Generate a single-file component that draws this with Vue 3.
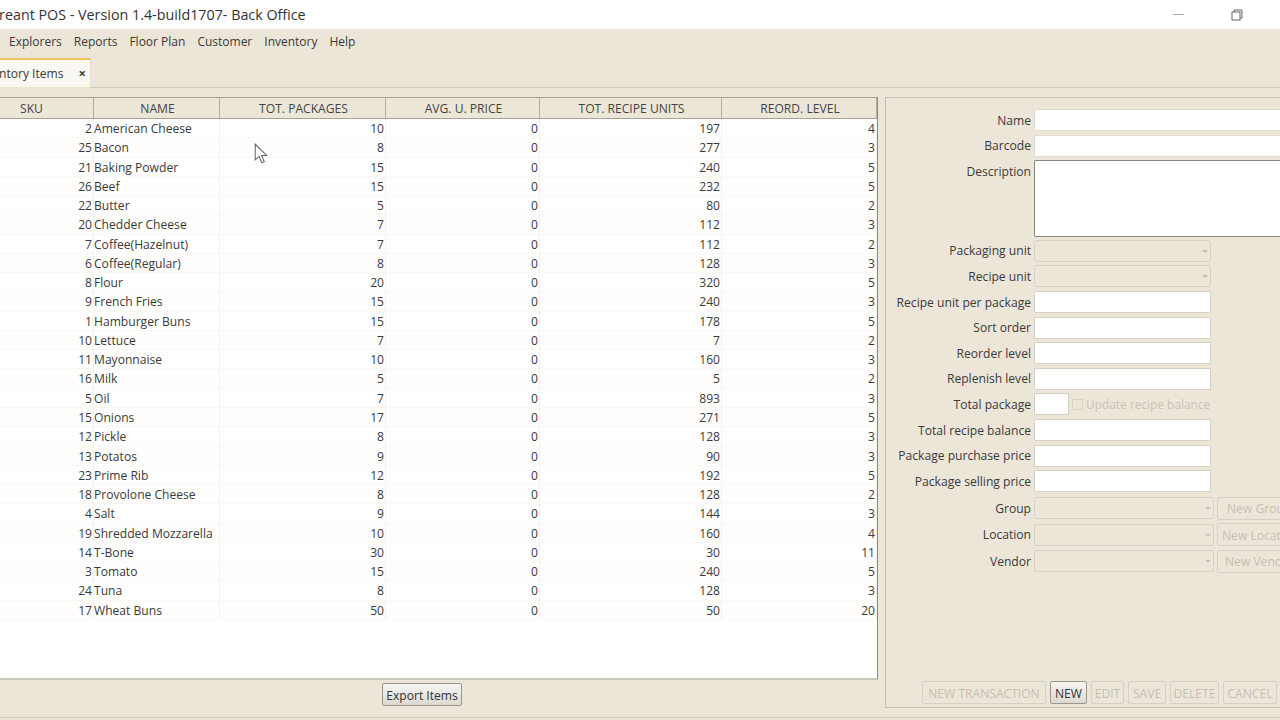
<script setup>
const menus = ['Explorers', 'Reports', 'Floor Plan', 'Customer', 'Inventory', 'Help']
const columns = ['SKU', 'NAME', 'TOT. PACKAGES', 'AVG. U. PRICE', 'TOT. RECIPE UNITS', 'REORD. LEVEL']
const items = [
  [2, 'American Cheese', 10, 0, 197, 4],
  [25, 'Bacon', 8, 0, 277, 3],
  [21, 'Baking Powder', 15, 0, 240, 5],
  [26, 'Beef', 15, 0, 232, 5],
  [22, 'Butter', 5, 0, 80, 2],
  [20, 'Chedder Cheese', 7, 0, 112, 3],
  [7, 'Coffee(Hazelnut)', 7, 0, 112, 2],
  [6, 'Coffee(Regular)', 8, 0, 128, 3],
  [8, 'Flour', 20, 0, 320, 5],
  [9, 'French Fries', 15, 0, 240, 3],
  [1, 'Hamburger Buns', 15, 0, 178, 5],
  [10, 'Lettuce', 7, 0, 7, 2],
  [11, 'Mayonnaise', 10, 0, 160, 3],
  [16, 'Milk', 5, 0, 5, 2],
  [5, 'Oil', 7, 0, 893, 3],
  [15, 'Onions', 17, 0, 271, 5],
  [12, 'Pickle', 8, 0, 128, 3],
  [13, 'Potatos', 9, 0, 90, 3],
  [23, 'Prime Rib', 12, 0, 192, 5],
  [18, 'Provolone Cheese', 8, 0, 128, 2],
  [4, 'Salt', 9, 0, 144, 3],
  [19, 'Shredded Mozzarella', 10, 0, 160, 4],
  [14, 'T-Bone', 30, 0, 30, 11],
  [3, 'Tomato', 15, 0, 240, 5],
  [24, 'Tuna', 8, 0, 128, 3],
  [17, 'Wheat Buns', 50, 0, 50, 20],
]
const units = ['Packaging unit', 'Recipe unit']
const numberFields = ['Recipe unit per package', 'Sort order', 'Reorder level', 'Replenish level']
const priceFields = ['Total recipe balance', 'Package purchase price', 'Package selling price']
const lookups = [
  { label: 'Group', action: 'New Group', cls: 'indent-a' },
  { label: 'Location', action: 'New Location', cls: 'indent-b' },
  { label: 'Vendor', action: 'New Vendor', cls: 'indent-c' },
]
const actions = [
  { label: 'NEW TRANSACTION', width: 124 },
  { label: 'NEW', width: 37, on: true },
  { label: 'EDIT', width: 33 },
  { label: 'SAVE', width: 38 },
  { label: 'DELETE', width: 49 },
  { label: 'CANCEL', width: 54 },
]
</script>

<template>
  <div class="app">
    <header class="titlebar">
      <span class="title">Floreant POS - Version 1.4-build1707- Back Office</span>
      <span class="win-min"></span>
      <svg class="win-restore" width="12" height="12" viewBox="0 0 12 12" fill="none" stroke="#666" stroke-width="1">
        <path d="M3 3V1h8v8H9" />
        <rect x="1" y="3" width="8" height="8" />
      </svg>
    </header>

    <nav class="menubar">
      <span v-for="m in menus" :key="m">{{ m }}</span>
    </nav>

    <div class="tabstrip">
      <div class="tab">
        <span class="tab-label">Inventory Items</span>
        <span class="tab-close">×</span>
      </div>
    </div>

    <main class="content">
      <section class="browser">
        <div class="grid">
          <div class="row head">
            <div v-for="c in columns" :key="c" class="cell">{{ c }}</div>
          </div>
          <div class="rows">
            <div v-for="it in items" :key="it[0]" class="row item">
              <div class="cell num">{{ it[0] }}</div>
              <div class="cell name">{{ it[1] }}</div>
              <div class="cell num">{{ it[2] }}</div>
              <div class="cell num">{{ it[3] }}</div>
              <div class="cell num">{{ it[4] }}</div>
              <div class="cell num">{{ it[5] }}</div>
            </div>
          </div>
        </div>
        <div class="browser-foot">
          <button class="btn export">Export Items</button>
        </div>
      </section>

      <section class="editor">
        <div class="form">
          <label class="field"><span>Name</span><i class="input long"></i></label>
          <label class="field"><span>Barcode</span><i class="input long"></i></label>
          <label class="field desc"><span>Description</span><i class="input long area"></i></label>
          <label v-for="u in units" :key="u" class="field">
            <span>{{ u }}</span><i class="input combo"><b class="caret"></b></i>
          </label>
          <label v-for="f in numberFields" :key="f" class="field">
            <span>{{ f }}</span><i class="input"></i>
          </label>
          <label class="field">
            <span>Total package</span><i class="input tiny"></i>
            <i class="check"></i><em class="check-label">Update recipe balance</em>
          </label>
          <label v-for="f in priceFields" :key="f" class="field">
            <span>{{ f }}</span><i class="input"></i>
          </label>
          <label v-for="l in lookups" :key="l.label" class="field lookup">
            <span>{{ l.label }}</span><i class="input combo wide"><b class="caret"></b></i>
            <button class="btn off new-btn" :class="l.cls">{{ l.action }}</button>
          </label>
        </div>
        <div class="actions">
          <button
            v-for="a in actions"
            :key="a.label"
            class="btn"
            :class="{ off: !a.on }"
            :style="{ width: a.width + 'px' }"
          >{{ a.label }}</button>
        </div>
      </section>
    </main>

    <div class="statusline"></div>

    <svg class="pointer" width="14" height="20" viewBox="0 0 13 19">
      <path d="M1 1v15l3.6-3.3 2.6 6 2.4-1-2.6-5.8H12z" fill="#fff" stroke="#666" stroke-width="1" />
    </svg>
  </div>
</template>

<style>
html, body { margin: 0; background: #ece6d8; }
</style>

<style scoped>
.app {
  position: relative;
  width: 1280px;
  height: 720px;
  overflow: hidden;
  background: #ece6d8;
  color: #3a3a3a;
  font: 12.1px "Open Sans", sans-serif;
}

.titlebar {
  height: 29px;
  background: #fff;
  display: flex;
  align-items: center;
}
.title {
  margin-left: -20.5px;
  font-size: 14.3px;
  color: #333;
  white-space: nowrap;
}
.win-min {
  width: 11px;
  height: 1px;
  background: #aaa;
  margin-left: auto;
}
.win-restore { margin: 0 37px 0 47px; }

.menubar {
  height: 29px;
  box-sizing: border-box;
  padding: 0 0 4px 9px;
  display: flex;
  align-items: center;
  gap: 12px;
  font-size: 12px;
}

.tabstrip {
  height: 30px;
  border-bottom: 1px solid #d3cdbf;
  box-sizing: border-box;
  display: flex;
  align-items: flex-end;
}
.tab {
  width: 91px;
  height: 30px;
  margin-bottom: -1px;
  box-sizing: border-box;
  background: #faf8f2;
  border-top: 2px solid #f3c45c;
  border-right: 1px dotted #d9c98a;
  border-bottom: 1px dotted #e2d6a6;
  display: flex;
  align-items: center;
  justify-content: flex-end;
  padding: 0 4px 1px 0;
  white-space: nowrap;
  overflow: hidden;
}
.tab-label { margin-right: 15px; }
.tab-close { font-size: 13px; font-weight: 700; line-height: 1; }

.content {
  height: 629px;
  box-sizing: border-box;
  display: flex;
  padding-top: 9px;
  margin-left: -32px;
}

.browser { width: 910px; flex: none; }
.grid {
  height: 583px;
  box-sizing: border-box;
  background: #fff;
  border-right: 1px solid #8f8a7e;
  border-bottom: 2px solid #c8c4b9;
}
.row {
  display: grid;
  grid-template-columns: 126px 126px 166px 154px 182px 155px;
}
.row.head {
  height: 22px;
  box-sizing: border-box;
  background: #ece6d8;
  border-top: 1px solid #a8a294;
  border-bottom: 1px solid #a8a294;
}
.head .cell {
  text-align: center;
  line-height: 21px;
  padding-left: 3px;
  color: #444;
  border-right: 1px solid #b3ad9f;
}
.item {
  height: 19.28px;
  box-shadow: inset 0 -1px 0 #f9f8f5;
}
.item:nth-child(even) { background: #fffefc; }
.cell {
  box-sizing: border-box;
  padding: 0 1px;
  white-space: nowrap;
  overflow: hidden;
}
.item .cell {
  line-height: 19px;
  border-right: 1px solid #f4f2ed;
}
.num { text-align: right; }
.item .name { padding-left: 0; }

.browser-foot {
  display: flex;
  justify-content: center;
  padding: 3px 2px 0 0;
}

.btn {
  height: 23px;
  box-sizing: border-box;
  padding: 1px 0 0;
  font: inherit;
  color: #333;
  white-space: nowrap;
  border: 1px solid #9a968c;
  border-radius: 2px;
  background: linear-gradient(#f6f5f2, #dcd9d0);
}
.btn.export { width: 80px; }
.btn.off {
  color: #c4bfb2;
  background: transparent;
  border-color: #d6d1c4;
}

.editor {
  width: 420px;
  height: 611px;
  flex: none;
  margin-left: 7px;
  box-sizing: border-box;
  border: 1px solid #c4bfb2;
  border-right: 0;
  display: flex;
  flex-direction: column;
}
.form {
  padding-top: 10.8px;
  display: flex;
  flex-direction: column;
  gap: 3px;
}
.field {
  display: flex;
  align-items: center;
  height: 22.6px;
}
.field > span {
  width: 145px;
  flex: none;
  text-align: right;
  margin-right: 3px;
  white-space: nowrap;
}
.input {
  display: block;
  width: 177px;
  height: 22px;
  flex: none;
  box-sizing: border-box;
  background: #fff;
  border: 1px solid #d5d0c3;
  border-radius: 1px;
  position: relative;
}
.input.long { width: 270px; border-color: #e0dbcf; }
.input.area {
  height: 77px;
  border-color: #8a867c;
}
.field.desc {
  height: 76.6px;
  align-items: flex-start;
}
.desc > span { margin-top: 3px; }
.input.combo {
  background: #ece6d8;
  border-color: #d6d1c4;
  border-radius: 3px;
}
.input.combo.wide { width: 180px; }
.input.tiny { width: 35px; }
.caret {
  position: absolute;
  right: 2px;
  top: 9px;
  border: 3px solid transparent;
  border-top: 3px solid #c4bfb2;
}
.check {
  display: block;
  width: 11px;
  height: 11px;
  box-sizing: border-box;
  margin-left: 3px;
  border: 1px solid #d6d1c4;
  border-radius: 1px;
}
.check-label {
  font-style: normal;
  color: #c9c4b8;
  margin-left: 3px;
  font-size: 11.9px;
  white-space: nowrap;
}
.lookup { height: 23.5px; }
.lookup:nth-last-child(3) { margin-top: 1px; }
.new-btn {
  width: 80px;
  margin-left: 3px;
  text-align: left;
}
.btn.indent-a { padding-left: 9px; }
.btn.indent-b { padding-left: 4px; }
.btn.indent-c { padding-left: 7px; }

.actions {
  margin-top: auto;
  margin-bottom: 3px;
  padding-left: 36px;
  display: flex;
  gap: 4px;
}

.statusline { border-top: 1px solid #d3cdbf; }

.pointer {
  position: absolute;
  left: 254px;
  top: 143px;
}
</style>
